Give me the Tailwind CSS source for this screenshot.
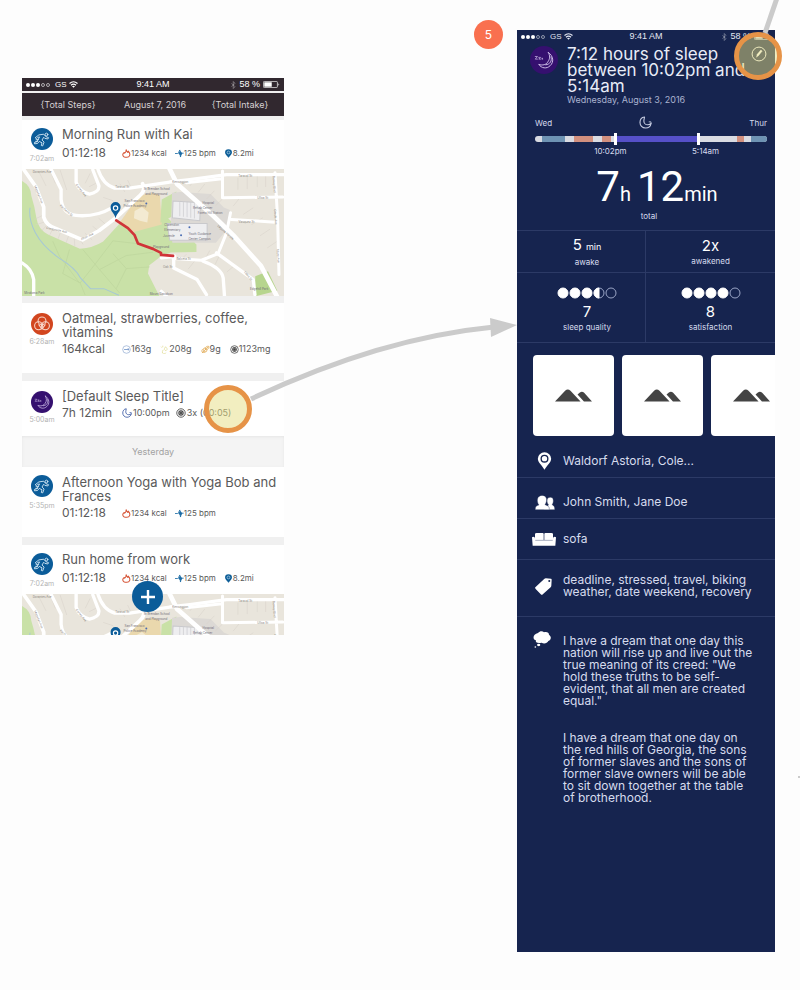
<!DOCTYPE html>
<html lang="en">
<head>
<meta charset="utf-8">
<meta name="viewport" content="width=device-width, initial-scale=1">
<title>Sleep journal flow</title>
<script src="https://cdn.jsdelivr.net/npm/@tailwindcss/browser@4"></script>
</head>
<body class="bg-[#fdfdfd] font-['Inter','Noto_Sans',sans-serif]">

<svg class="hidden" aria-hidden="true">
  <symbol id="wifi" viewBox="0 0 18 14"><g fill="none" stroke="currentColor" stroke-width="2.4"><path d="M1 5Q9-2 17 5"/><path d="M4 8.5Q9 4 14 8.5"/></g><path d="M6 10.5Q9 8 12 10.5L9 13.6z" fill="currentColor"/></symbol>
  <symbol id="bt" viewBox="0 0 10 16"><path d="M1 4.500l7 7-3.500 3.500V1L8 4.500l-7 7" fill="none" stroke="currentColor" stroke-width="1.300"/></symbol>
  <symbol id="battery" viewBox="0 0 34 14"><rect x=".8" y=".8" width="28" height="12.400" rx="2" fill="none" stroke="currentColor" stroke-width="1.400"/><path d="M2.500 2.500h15v9h-15z" fill="currentColor"/><path d="M31 4.500q3 2.500 0 5z" fill="currentColor"/></symbol>
  <symbol id="run" viewBox="0 0 64 64"><circle cx="32" cy="32" r="32" fill="#0b5c99"/><g fill="none" stroke="#d5e8f5" stroke-width="2.600" stroke-linejoin="round" stroke-linecap="round"><circle cx="45" cy="19" r="4"/><path d="M24 20l13-2 6 7 8 3-2 4-9-2-3-3-5 8 6 6-4 11-4-1 2-8-8-4-5 6-9 1v-4l7-2 8-14-5 1-4 4-3-2z"/><path d="M15 34h7M14 39h5"/></g></symbol>
  <symbol id="food" viewBox="0 0 64 64"><circle cx="32" cy="32" r="32" fill="#d2461f"/><g fill="none" stroke="#f8d9cd" stroke-width="3"><circle cx="32" cy="23" r="11.500"/><circle cx="22" cy="37" r="11.500"/><circle cx="42" cy="37" r="11.500"/><path d="M22 33l10 14 10-14M27 32h10"/></g></symbol>
  <symbol id="sleep" viewBox="0 0 64 64"><circle cx="32" cy="32" r="32" fill="#35106f"/><g fill="none" stroke="#cfbfe9" stroke-width="2.200" stroke-linecap="round" stroke-linejoin="round"><path d="M42 15c12 8 13 22 4 30-8 8-20 6-26-3 9 3 17 1 21-6 5-7 5-14 1-21z"/><path d="M48 25c3 9-2 17-12 18"/><path d="M12 24h5l-5 6h5M20 26h4l-4 4h4M27 28h2l-2 2h2" stroke-width="1.600"/></g></symbol>
  <symbol id="flame" viewBox="0 0 26 26"><path d="M12 2c1 5 3 6 5 8 1-2 1-3 1-4 4 4 6 8 4 13-1 3-4 5-8 5H9c-5-1-8-6-6-10 1-2 2-2 3-4l2 2c3-2 4-6 4-10z" fill="none" stroke="#d65335" stroke-width="3" stroke-linejoin="round"/></symbol>
  <symbol id="pulse" viewBox="0 0 28 26"><path d="M0 13h8l3-3 4-8 2 22 3-12h7" fill="none" stroke="#1d6ca5" stroke-width="2.600" stroke-linejoin="round"/><path d="M10 12l7-7 6 8-6 7z" fill="#1d6ca5"/></symbol>
  <symbol id="pin" viewBox="0 0 22 26"><path d="M11 25C6 19 1 15 1 10a10 9 0 0 1 20 0c0 5-5 9-10 15z" fill="#0f5f98"/><circle cx="11" cy="10" r="4" fill="none" stroke="#b5d5ec" stroke-width="2"/></symbol>
  <symbol id="carb" viewBox="0 0 26 26"><circle cx="13" cy="13" r="11" fill="none" stroke="#91abd2" stroke-width="2"/><path d="M6 13h14M17 9l3 4-3 3" fill="none" stroke="#6f92c6" stroke-width="2.400"/></symbol>
  <symbol id="fat" viewBox="0 0 26 26"><g fill="none" stroke="#dedb8e" stroke-width="2"><path d="M13 10l3-5 4 5a4 4 0 1 1-7 0zM3 5l3 3M8 2v4"/><path d="M9 14l-2 5a5 5 0 0 0 10 3"/></g></symbol>
  <symbol id="grain" viewBox="0 0 28 26"><g fill="none" stroke="#dda244" stroke-width="2.200"><path d="M3 24L22 5M8 17C5 10 11 5 15 11M13 13c-1-7 5-11 11-10 1 6-3 12-10 11M9 18c5 5 12 1 8-5M5 12c-3 4-3 6-1 9 4 2 7 2 10-1"/></g></symbol>
  <symbol id="target" viewBox="0 0 26 26"><circle cx="13" cy="13" r="11" fill="none" stroke="#555" stroke-width="2.400"/><circle cx="13" cy="13" r="7" fill="#444"/><circle cx="13" cy="13" r="4" fill="none" stroke="#bbb" stroke-width="1.300"/></symbol>
  <symbol id="moon" viewBox="0 0 40 40"><path d="M17 3C8 4 3 11 3 20s7 17 17 17c9 0 16-6 17-14-3 2-5 4-10 4-7 0-12-5-12-12 0-5 2-8 2-12z" fill="none" stroke="currentColor" stroke-width="3.400" stroke-linejoin="round"/><path d="M30 18h7v7" fill="none" stroke="currentColor" stroke-width="2.600"/></symbol>
  <symbol id="peaks" viewBox="0 0 110 38"><path d="M0 37L30 5q8-8 16 0l30 32zM67 16l7-6q6-5 12 0l24 27H86z" fill="#444"/></symbol>
  <symbol id="map" viewBox="8 9 784 381" preserveAspectRatio="xMidYMin slice">
    <path d="M8 9h784v381H8z" fill="#e9e5dc"/>
    <path d="M8 45q27 14 28 45 10 32 15 65 5 35 35 50l95 43q40-3 70-22l50-55 25-30 60 34 44-32 100 92v22l-77 2-28 10-36 28-4 25 38 75H8z" fill="#c9e1a7"/>
    <path d="M355 92q48-18 66-4l5 87-86 23-40-28z" fill="#ead8ad"/>
    <path d="M345 135l22-12 20 16-4 30-22-5-18-8z" fill="#f3ead2"/>
    <path d="M426 100l44-24-3 70-45 24z" fill="#c9e1a7"/>
    <path d="M482 78l90 6 40 40 18 8-2 50-40 48-130 0-5-40 4-110z" fill="#dcd9d5"/>
    <path d="M460 105l82 5-2 54-82-9zM442 172h120v50H450z" fill="#eeeef0" stroke="#c9c9cc" stroke-width="3"/>
    <path d="M480 108v42m11-42v44m11-44v45m11-44v46m11-46v48" stroke="#c9c9cc" stroke-width="2"/>
    <path d="M450 232l75-2v22l-71 2z" fill="#c9e1a7"/>
    <path d="M706 330l38-15 28 58-66 17z" fill="#b7d58e"/>
    <g fill="none" stroke="#d6d1c8" stroke-width="1.500"><path d="M45 160l24-12m-20 28l25-8m-7 26l20-22m4 34l13-25m12 37l10-28m14 40l10-29m16 39l-2-30m27 25l-15-24m42 10l-22-20m45-3l-22-18m43-2l-25-22M60 20l20 40m12-48l16 40m14-40l20 60m70-50l-15 30m32 0l-20 10m20 20l-28 2m80 20l-30-10m65-16l-15-25m35 14l-12-25M510 60l20-25m5 44l20-25m5 45l24-25m3 45l25-24m42-60v36m28-40v38m30-40v34m25-34v34M640 120l20-25m10 50l30-20m-5 50l34-20m-9 54l30-20m-8 56l30-20m-220 60l18-32m16 42l15-32m20 54l24-20m-140 12l20-25m-45 0l20-20"/></g>
    <g fill="none" stroke="#bdd59c" stroke-width="2"><path d="M150 250l-20 72 52 28 40-50 58-76 70 8M190 250l50 60 80-42 80-10M240 310l60 70M182 350l15 36M280 262l40 45-30 60M320 307l70-5M100 225l20 45 60 80"/></g>
    <path d="M32 125q-5 35 16 75t70 75q50 30 65 60l30 32h40l45 20" fill="none" stroke="#a6c7d6" stroke-width="3"/>
    <g fill="none" stroke="#fff" stroke-linecap="round" stroke-linejoin="round">
      <path d="M12 9l38 54 23 60v30q8 26 36 34l80 34 50-28 50-38 70-65q20-17 10-37" stroke-width="11"/>
      <path d="M90 0l35 70v30q5 44 45 48 60 5 105-22M170 9v40q10 28 40 35 30-6 28-25L220 12M235 9q15 47 50 57h45l120-18 60-7 110-15h172" stroke-width="10"/>
      <path d="M450 9l22 45 108 95 60 58 83 92 50 95" stroke-width="14"/>
      <path d="M608 15v80l180-2M765 20l8 140 4 165M635 160l130 8M500 50l106-12M632 140l-12 60-25 62-50 20-85-5" stroke-width="9"/>
      <path d="M462 280v25l70 35 28 45M550 285q55 20 60 50l4 55M590 260l110 80 5 45M425 275l40-5M8 290q30 18 35 50v50M425 375l20 20" stroke-width="10"/>
    </g>
    <g fill="#8a8680" font-size="9">
      <text x="40" y="22">Dorantes Ave</text><text x="287" y="66">Taraval St</text><text x="458" y="50">Kensington</text><text x="655" y="34">Taraval St</text><text x="712" y="98">Ulloa St</text>
      <text transform="translate(44 60) rotate(68)">Magellan Ave</text><text transform="translate(168 56) rotate(52)">Cortes Ave</text><text transform="translate(120 120) rotate(40)">Pacheco St</text><text x="80" y="188" transform="rotate(12 80 188)">Castenada Ave</text><text transform="translate(186 222) rotate(-25)">Alton Ave</text><text transform="translate(592 180) rotate(42)">Laguna Honda</text><text transform="translate(758 30) rotate(86)">Dewey Blvd</text><text transform="translate(762 130) rotate(86)">Garcia Ave</text><text transform="translate(770 250) rotate(86)">Idora Ave</text><text x="656" y="172">Vasquez St</text><text x="470" y="282">Balceta St</text><text x="430" y="306">Oak St</text><text transform="translate(672 318) rotate(50)">Ulloa St</text>
    </g>
    <g fill="#716d78" font-size="9">
      <text x="372" y="73">St Brendan School</text><text x="377" y="87">and Playground</text><text x="315" y="109">San Francisco</text><text x="312" y="123">Police Academy</text><text x="548" y="115">Hospital</text><text x="520" y="129">Rehab Center</text><text x="534" y="145">Forest Hill Station</text><text x="434" y="181">Clarendon</text><text x="434" y="195">Elementary</text><text x="430" y="212">Juvenile</text><text x="506" y="206">Youth Guidance</text><text x="506" y="220">Center Campus</text><text x="400" y="244">Playground</text><text x="690" y="372">Edgehill Park</text><text x="15" y="384">Miraloma Park</text><text x="390" y="386">Mount Davidson</text>
    </g>
    <g fill="#4a6cb3"><circle cx="380" cy="112" r="3"/><circle cx="509" cy="183" r="3"/><circle cx="484" cy="207" r="3"/></g>
    <path d="M290 163l35 23 20 21 10 25 45 16 24 12v6l36 3" fill="none" stroke="#d03438" stroke-width="8" stroke-linecap="round" stroke-linejoin="round"/>
    <path d="M288 156c-4-16-15-19-15-33a15 15 0 0 1 30 0c0 14-11 17-15 33z" fill="#0b5c99"/><circle cx="288" cy="126" r="6.500" fill="#0b5c99" stroke="#fff" stroke-width="3.500"/>
  </symbol>
</svg>

<main class="relative grid min-h-[990px] grid-cols-[minmax(0,22fr)_minmax(0,262fr)_minmax(0,233fr)_minmax(0,258fr)_minmax(0,25fr)] items-start overflow-hidden">

  <!-- Activity feed -->
  <section aria-label="Activity feed" class="relative col-start-2 mt-[78px] bg-[#f0f0f0] text-[#5a5a5a]">
    <div class="grid h-[13px] grid-cols-3 items-center bg-[#31282f] px-1 font-['Liberation_Sans',Arial,sans-serif] text-[9px] leading-none text-white">
      <div class="flex items-center gap-px">
        <i class="size-1 rounded-full bg-white"></i><i class="size-1 rounded-full bg-white"></i><i class="size-1 rounded-full bg-white"></i><i class="size-1 rounded-full border border-white/60"></i><i class="size-1 rounded-full border border-white/60"></i>
        <span class="ml-1 text-[8px]">GS</span><svg class="ml-px h-[7px] w-[9px]"><use href="#wifi"/></svg>
      </div>
      <span class="text-center">9:41 AM</span>
      <div class="flex items-center justify-end gap-[3px]"><svg class="h-2 w-[5px] text-white/50"><use href="#bt"/></svg><span>58 %</span><svg class="h-[7px] w-[17px]"><use href="#battery"/></svg></div>
    </div>
    <header class="mt-0.5 grid h-[23px] grid-cols-[92px_1fr_88px] items-center bg-[#31282f] text-center text-[9px] leading-none whitespace-nowrap text-[#d6d1d4]">
      <span>{Total Steps}</span><h1>August 7, 2016</h1><span>{Total Intake}</span>
    </header>

    <article class="mt-1 h-[49px] bg-white pt-[7px]">
      <div class="grid grid-cols-[40px_1fr]">
        <div class="flex flex-col items-center gap-1 pt-px"><svg class="size-[22px]"><use href="#run"/></svg><time class="text-[7px] leading-[10px] text-[#b4b4b4]">7:02am</time></div>
        <div class="leading-[14px] whitespace-nowrap"><h2 class="text-[13px] leading-[14px]">Morning Run with Kai</h2>
          <div class="mt-[5px] grid grid-cols-[60px_1fr] items-center"><span class="text-xs leading-[14px]">01:12:18</span><span class="flex gap-2 text-[8px]"><span class="flex items-center"><svg class="size-[9px]"><use href="#flame"/></svg>1234 kcal</span><span class="flex items-center"><svg class="size-[9px]"><use href="#pulse"/></svg>125 bpm</span><span class="flex items-center"><svg class="size-[9px]"><use href="#pin"/></svg>8.2mi</span></span></div>
        </div>
      </div>
    </article>
    <svg class="block h-[127px] w-full" role="img" aria-label="Route map"><use href="#map"/></svg>

    <article class="mt-[7px] h-[70px] bg-white pt-2">
      <div class="grid grid-cols-[40px_1fr]">
        <div class="flex flex-col items-center gap-0.5 pt-0.5"><svg class="size-[22px]"><use href="#food"/></svg><time class="text-[7px] leading-[10px] text-[#b4b4b4]">6:28am</time></div>
        <div class="leading-[14px] whitespace-nowrap"><h2 class="text-[13px] leading-[14px]">Oatmeal, strawberries, coffee,<br>vitamins</h2>
          <div class="mt-[3px] grid grid-cols-[60px_1fr] items-center"><span class="text-xs leading-[14px]">164kcal</span><span class="flex gap-[9px] text-[9px]"><span class="flex items-center"><svg class="size-[9px]"><use href="#carb"/></svg>163g</span><span class="flex items-center"><svg class="size-[9px]"><use href="#fat"/></svg>208g</span><span class="flex items-center"><svg class="size-[9px]"><use href="#grain"/></svg>9g</span><span class="flex items-center"><svg class="size-[9px]"><use href="#target"/></svg>1123mg</span></span></div>
        </div>
      </div>
    </article>

    <article class="mt-2 h-[55px] bg-white pt-2">
      <div class="grid grid-cols-[40px_1fr]">
        <div class="flex flex-col items-center gap-0.5 pt-0.5"><svg class="size-[22px]"><use href="#sleep"/></svg><time class="text-[7px] leading-[10px] text-[#b4b4b4]">5:00am</time></div>
        <div class="leading-[14px] whitespace-nowrap"><h2 class="text-[13px] leading-[14px]">[Default Sleep Title]</h2>
          <div class="mt-[3px] grid grid-cols-[60px_1fr] items-center"><span class="text-xs leading-[14px]">7h 12min</span><span class="flex gap-1.5 text-[9px]"><span class="flex items-center gap-px"><svg class="size-[10px] text-[#3c5ba5]"><use href="#moon"/></svg>10:00pm</span><span class="flex items-center gap-px"><svg class="size-[10px]"><use href="#target"/></svg>3x (00:05)</span></span></div>
        </div>
      </div>
    </article>

    <h2 class="flex h-[31px] items-center justify-center bg-[#f4f4f4] text-[9px] text-[#a2a2a2] shadow-[inset_0_1px_3px_#e6e6e6]">Yesterday</h2>

    <article class="h-[70px] bg-white pt-2">
      <div class="grid grid-cols-[40px_1fr]">
        <div class="flex flex-col items-center gap-1"><svg class="size-[22px]"><use href="#run"/></svg><time class="text-[7px] leading-[10px] text-[#b4b4b4]">5:35pm</time></div>
        <div class="leading-[14px] whitespace-nowrap"><h2 class="text-[13px] leading-[14px]">Afternoon Yoga with Yoga Bob and<br>Frances</h2>
          <div class="mt-[3px] grid grid-cols-[60px_1fr] items-center"><span class="text-xs leading-[14px]">01:12:18</span><span class="flex gap-2 text-[8px]"><span class="flex items-center"><svg class="size-[9px]"><use href="#flame"/></svg>1234 kcal</span><span class="flex items-center"><svg class="size-[9px]"><use href="#pulse"/></svg>125 bpm</span></span></div>
        </div>
      </div>
    </article>

    <article class="mt-2 h-[49px] bg-white pt-[7px]">
      <div class="grid grid-cols-[40px_1fr]">
        <div class="flex flex-col items-center gap-1 pt-px"><svg class="size-[22px]"><use href="#run"/></svg><time class="text-[7px] leading-[10px] text-[#b4b4b4]">7:02am</time></div>
        <div class="leading-[14px] whitespace-nowrap"><h2 class="text-[13px] leading-[14px]">Run home from work</h2>
          <div class="mt-[5px] grid grid-cols-[60px_1fr] items-center"><span class="text-xs leading-[14px]">01:12:18</span><span class="flex gap-2 text-[8px]"><span class="flex items-center"><svg class="size-[9px]"><use href="#flame"/></svg>1234 kcal</span><span class="flex items-center"><svg class="size-[9px]"><use href="#pulse"/></svg>125 bpm</span><span class="flex items-center"><svg class="size-[9px]"><use href="#pin"/></svg>8.2mi</span></span></div>
        </div>
      </div>
    </article>
    <div class="h-[41px] overflow-hidden"><svg class="block h-[127px] w-full" role="img" aria-label="Route map"><use href="#map"/></svg></div>

    <button type="button" aria-label="Add entry" class="absolute bottom-[23px] left-[42%] flex size-[31px] items-center justify-center rounded-full bg-[#0b5c99]">
      <svg class="size-4" viewBox="0 0 16 16"><path d="M8 1v14M1 8h14" stroke="#fff" stroke-width="2.400"/></svg>
    </button>
    <span class="absolute top-[307px] right-8 size-12 rounded-full border-5 border-[#e69347] bg-[#e5dd82]/50"></span>
  </section>

  <!-- Sleep detail -->
  <section aria-label="Sleep detail" class="relative col-start-4 mt-[30px] min-h-[922px] bg-[#16244f] text-[#d6dcee]">
    <div class="grid h-[13px] grid-cols-3 items-center px-1 font-['Liberation_Sans',Arial,sans-serif] text-[9px] leading-none text-[#e4e7f2]">
      <div class="flex items-center gap-px">
        <i class="size-1 rounded-full bg-white"></i><i class="size-1 rounded-full bg-white"></i><i class="size-1 rounded-full bg-white"></i><i class="size-1 rounded-full border border-white/50"></i><i class="size-1 rounded-full border border-white/50"></i>
        <span class="ml-1 text-[8px]">GS</span><svg class="ml-px h-[7px] w-[9px]"><use href="#wifi"/></svg>
      </div>
      <span class="text-center">9:41 AM</span>
      <div class="flex items-center justify-end gap-[3px]"><svg class="h-2 w-[5px] text-white/50"><use href="#bt"/></svg><span>58 %</span><svg class="h-[7px] w-[17px]"><use href="#battery"/></svg></div>
    </div>

    <header class="grid grid-cols-[50px_1fr_24px] pt-[3px]">
      <svg class="ml-[13px] size-7"><use href="#sleep"/></svg>
      <div class="whitespace-nowrap"><h1 class="text-[17px] leading-4 text-[#e8ecf8]">7:12 hours of sleep<br>between 10:02pm and<br>5:14am</h1><p class="text-[9px] leading-3 text-[#aab3cf]">Wednesday, August 3, 2016</p></div>
      <button type="button" aria-label="Edit" class="size-4 text-white"><svg class="size-4" viewBox="0 0 44 44" fill="none" stroke="currentColor" stroke-width="2.600"><circle cx="22" cy="22" r="19"/><path d="M15 31l2-8 10-12 4 3-10 12z" fill="currentColor" stroke-width="1"/></svg></button>
    </header>

    <div class="pt-2.5 pr-2 pl-[18px] text-[8px] leading-3">
      <div class="grid grid-cols-[9fr_1fr_10fr] items-center"><span>Wed</span><svg class="size-[13px] justify-self-center text-[#c5cbe0]"><use href="#moon"/></svg><span class="text-right">Thur</span></div>
      <div class="relative mt-[7px]">
        <div class="flex h-1.5 overflow-hidden rounded-full bg-[#d9dbe2]">
          <span class="ml-[3%] w-[10%] bg-[#6e93b3]"></span><span class="ml-[4%] w-[8%] bg-[#d2907f]"></span><span class="ml-[4%] w-[4%] bg-[#d2907f]"></span><span class="ml-[1%] w-[36%] bg-[#5650c8]"></span><span class="ml-[17%] w-[3%] bg-[#d2907f]"></span><span class="ml-[3%] w-[7%] bg-[#6e93b3]"></span>
        </div>
        <i class="absolute -top-[3px] left-[34%] h-3 w-[3px] bg-white"></i><i class="absolute -top-[3px] left-[70%] h-3 w-[3px] bg-white"></i>
        <div class="mt-[3px] flex"><span class="w-[65%] text-center">10:02pm</span><span class="w-[17%] text-center">5:14am</span></div>
      </div>
    </div>

    <div class="pt-4 text-center">
      <p class="flex items-baseline justify-center gap-1.5 pl-[22px] font-['Roboto',sans-serif] text-[42px] leading-7 text-white"><span>7<span class="text-xl">h</span></span><span>12<span class="text-xl">min</span></span></p>
      <p class="pt-0.5 pl-1.5 text-[8px] leading-3">total</p>
    </div>

    <dl class="mt-2 grid grid-cols-2 border-t border-[#2c3a66] text-center text-[8px]">
      <div class="flex h-[42px] flex-col-reverse justify-center border-r border-b border-[#2c3a66] pl-3"><dt class="leading-3">awake</dt><dd class="text-[15px] leading-[18px] text-white">5 <span class="text-[9px]">min</span></dd></div>
      <div class="flex h-[42px] flex-col-reverse justify-center border-b border-[#2c3a66]"><dt class="leading-3">awakened</dt><dd class="text-[15px] leading-[18px] text-white">2x</dd></div>
      <div class="flex h-[70px] flex-col-reverse justify-center border-r border-b border-[#2c3a66] pt-1 pl-3"><dt class="leading-3">sleep quality</dt><dd class="text-[15px] leading-[18px] text-white"><svg class="mx-auto mb-1 h-3 w-[60px]" viewBox="0 0 60 12" fill="#fff" stroke="#fff"><circle cx="6" cy="6" r="5"/><circle cx="18" cy="6" r="5"/><circle cx="30" cy="6" r="5"/><circle cx="42" cy="6" r="5" fill="none" stroke="#9aa5c6"/><path d="M42 1a5 5 0 0 0 0 10z"/><circle cx="54" cy="6" r="5" fill="none" stroke="#9aa5c6"/></svg>7</dd></div>
      <div class="flex h-[70px] flex-col-reverse justify-center border-b border-[#2c3a66] pt-1"><dt class="leading-3">satisfaction</dt><dd class="text-[15px] leading-[18px] text-white"><svg class="mx-auto mb-1 h-3 w-[60px]" viewBox="0 0 60 12" fill="#fff" stroke="#fff"><circle cx="6" cy="6" r="5"/><circle cx="18" cy="6" r="5"/><circle cx="30" cy="6" r="5"/><circle cx="42" cy="6" r="5"/><circle cx="54" cy="6" r="5" fill="none" stroke="#9aa5c6"/></svg>8</dd></div>
    </dl>

    <div class="flex gap-2 overflow-hidden pt-3 pl-4">
      <div class="flex size-[81px] shrink-0 items-center justify-center rounded-sm bg-white"><svg class="h-[13px] w-[37px]"><use href="#peaks"/></svg></div>
      <div class="flex size-[81px] shrink-0 items-center justify-center rounded-sm bg-white"><svg class="h-[13px] w-[37px]"><use href="#peaks"/></svg></div>
      <div class="flex size-[81px] shrink-0 items-center justify-center rounded-sm bg-white"><svg class="h-[13px] w-[37px]"><use href="#peaks"/></svg></div>
    </div>

    <ul class="text-xs leading-3">
      <li class="grid h-[42px] grid-cols-[46px_1fr] items-center border-b border-[#2c3a66] pt-2"><svg class="ml-5 h-[18px] w-[15px]" viewBox="0 0 44 54"><path d="M22 53C15 40 2 31 2 20a20 19 0 0 1 40 0c0 11-13 20-20 33z" fill="#fff"/><circle cx="22" cy="20" r="10" fill="#fff" stroke="#16244f" stroke-width="4"/></svg><span>Waldorf Astoria, Cole...</span></li>
      <li class="grid h-[41px] grid-cols-[46px_1fr] items-center border-b border-[#2c3a66] pt-2"><svg class="ml-[18px] h-[15px] w-5" viewBox="0 0 56 42" fill="#fff" stroke="#16244f" stroke-width="1"><path d="M24 41h31c1-7-1-11-7-14 3-5 4-9 3-14-1-9-15-9-17 0-1 6 1 11 4 15z"/><path d="M1 41c-1-8 2-11 10-13-4-6-5-11-4-17C9-2 30-2 32 10c1 6 0 11-4 17 9 3 13 6 12 14z"/></svg><span>John Smith, Jane Doe</span></li>
      <li class="grid h-[41px] grid-cols-[46px_1fr] items-center border-b border-[#2c3a66]"><svg class="ml-[15px] h-[13px] w-6" viewBox="0 0 72 39" fill="#fff"><path d="M9 3q0-3 5-3h18q3 0 3 3v18H9zM37 3q0-3 3-3h18q5 0 5 3v18H37z"/><path d="M0 13q4-4 8 0l2 9h52l2-9q4-4 8 0l-2 25H2z"/><path d="M10 21.500h52" stroke="#8a93ad"/></svg><span>sofa</span></li>
      <li class="grid h-[57px] grid-cols-[46px_1fr] items-center border-b border-[#2c3a66] pb-1"><svg class="ml-[18px] size-[17px]" viewBox="0 0 50 50"><path d="M1 27L27 3q2-2 5-2l15 1q2 0 2 3l-1 18q0 2-2 4L23 48q-3 3-6 0L2 32q-3-3-1-5z" fill="#fff"/><circle cx="42" cy="9" r="3" fill="#16244f"/></svg><span class="whitespace-nowrap">deadline, stressed, travel, biking<br>weather, date weekend, recovery</span></li>
      <li class="grid grid-cols-[46px_1fr] pt-[18px]"><svg class="-mt-1 ml-4 h-[17px] w-[18px]" viewBox="0 0 54 51" fill="#fff"><path d="M15 6c6-7 14-6 18-2 8-3 15 1 15 7 8 5 7 16-2 19-3 8-15 9-20 5C13 39 6 33 9 28-3 25 0 9 15 6z"/><ellipse cx="17" cy="42" rx="5" ry="3.500"/><circle cx="7" cy="48" r="2.500"/></svg>
        <div class="space-y-[25px] whitespace-nowrap"><p>I have a dream that one day this<br>nation will rise up and live out the<br>true meaning of its creed: "We<br>hold these truths to be self-<br>evident, that all men are created<br>equal."</p><p>I have a dream that one day on<br>the red hills of Georgia, the sons<br>of former slaves and the sons of<br>former slave owners will be able<br>to sit down together at the table<br>of brotherhood.</p></div></li>
    </ul>
    <span class="absolute top-0.5 -right-[7px] size-12 rounded-full border-5 border-[#e69347] bg-[#e5dd82]/50"></span>
  </section>

  <!-- Flow annotations -->
  <span class="absolute top-5 left-[59.25%] flex size-[29px] items-center justify-center rounded-full bg-[#f9704f] text-xs text-white">5</span>
  <svg class="pointer-events-none absolute top-0 left-0 h-[990px] w-full" viewBox="0 0 800 990" preserveAspectRatio="none" aria-hidden="true">
    <path d="M251 399Q380 338 494 327" fill="none" stroke="#cbcbcb" stroke-width="5"/>
    <path d="M490 318l27 7-26 12z" fill="#cbcbcb"/>
    <path d="M765 33L777-2" stroke="#cbcbcb" stroke-width="5"/>
    <path d="M798 777h2" stroke="#cbcbcb" stroke-width="2"/>
  </svg>
</main>
</body>
</html>
